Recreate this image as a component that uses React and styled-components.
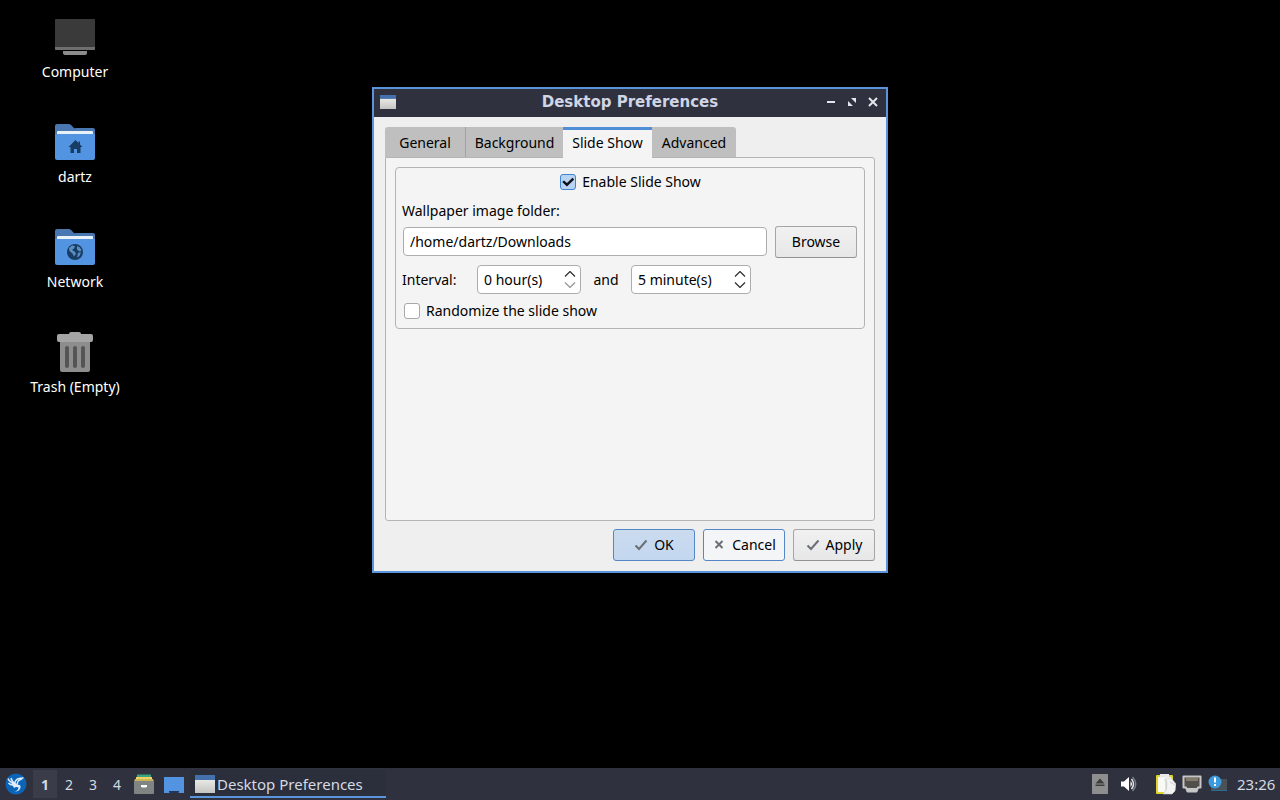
import React, { useState } from "react";
import styled, { createGlobalStyle, css } from "styled-components";

const color = {
  accent: "#5a94da",
  bar: "#2f323e",
  barText: "#d3dae3",
  window: "#efefef",
  panel: "#f4f4f4",
  line: "#b4b4b4",
  tab: "#bfbfbf",
};

const GlobalStyle = createGlobalStyle`
  *, *::before, *::after { box-sizing: border-box; }
  body { margin: 0; background: #000; }
  body, button, input {
    font-family: "Noto Sans", "Open Sans", sans-serif;
    font-size: 14px;
    line-height: 20px;
    color: #000;
  }
  button { padding: 0; margin: 0; border: 0; background: none; }
  svg { display: block; flex: none; }
`;

const Screen = styled.div`
  min-height: 100vh;
  display: flex;
  flex-direction: column;
  background: #000;
`;

const Desktop = styled.main`
  position: relative;
  flex: 1;
`;

const IconColumn = styled.div`
  width: 150px;
  padding-top: 16px;
  display: flex;
  flex-direction: column;
  gap: 36px;
`;

const DesktopIcon = styled.a`
  height: 69px;
  display: flex;
  flex-direction: column;
  align-items: center;
  gap: 4px;
  color: #fff;
  text-decoration: none;
`;

const Window = styled.section`
  position: absolute;
  left: 372px;
  top: 87px;
  width: 516px;
  border: 2px solid ${color.accent};
  background: ${color.window};
`;

const TitleBar = styled.header`
  height: 28px;
  padding: 0 6px 2px;
  display: flex;
  align-items: center;
  background: ${color.bar};
`;

const Title = styled.h1`
  flex: 1;
  margin: 0;
  padding-left: 40px;
  text-align: center;
  font: bold 15px/20px "DejaVu Sans", sans-serif;
  color: #d0d5e6;
`;

const TitleButtons = styled.div`
  display: flex;
  gap: 7px;
`;

const TitleButton = styled.button`
  width: 14px;
  height: 14px;
`;

const WindowBody = styled.div`
  padding: 10px 11px;
`;

const TabList = styled.div`
  display: flex;
`;

const Tab = styled.button`
  width: ${(p) => p.$width}px;
  height: 30px;
  padding-top: 2px;
  background: ${color.tab};
  border-right: ${(p) => (p.$divided ? "1px solid #a2a2a2" : "0")};
  &:first-child { border-top-left-radius: 3px; }
  &:last-child { border-top-right-radius: 3px; }
  ${(p) =>
    p.$active &&
    css`
      height: 31px;
      margin-bottom: -1px;
      padding: 0 0 2px;
      z-index: 1;
      background: ${color.panel};
      border-top: 3px solid #4f8ed4;
    `}
`;

const TabPanel = styled.div`
  height: 364px;
  padding: 9px;
  border: 1px solid ${color.line};
  border-radius: 0 3px 3px 3px;
  background: ${color.panel};
`;

const Group = styled.fieldset`
  margin: 0;
  min-width: 0;
  height: 162px;
  padding: 4px 7px 0 6px;
  border: 1px solid ${color.line};
  border-radius: 4px;
`;

const CheckLabel = styled.label`
  display: flex;
  align-items: center;
  justify-content: ${(p) => (p.$centered ? "center" : "flex-start")};
  gap: 6px;
  padding-left: 2px;
`;

const CheckBox = styled.input`
  appearance: none;
  width: 16px;
  height: 16px;
  margin: 0;
  display: grid;
  place-items: center;
  border: 1px solid #a8a8a8;
  border-radius: 3px;
  background: #fff;
  &:checked {
    border-color: #3f84d2;
    background: #b9d3f2;
  }
  &:checked::before {
    content: "";
    width: 12px;
    height: 10px;
    background: #10131c;
    clip-path: polygon(0 50%, 15% 34%, 40% 60%, 86% 8%, 100% 24%, 40% 96%);
  }
`;

const FieldLabel = styled.label`
  display: block;
  padding: 9px 0 5px;
`;

const Row = styled.div`
  display: flex;
  align-items: center;
`;

const PathRow = styled(Row)`
  align-items: flex-start;
  gap: 8px;
  padding-left: 1px;
`;

const field = css`
  height: 29px;
  border: 1px solid #adadad;
  border-radius: 4px;
  background: #fff;
`;

const PathInput = styled.input`
  ${field}
  flex: 1;
  min-width: 0;
  margin-top: 1px;
  padding: 0 6px;
`;

const Button = styled.button`
  width: 82px;
  height: 32px;
  display: flex;
  align-items: center;
  justify-content: center;
  gap: 6px;
  border: 1px solid #a5a5a5;
  border-bottom-color: #929292;
  border-radius: 3px;
  background: linear-gradient(#f1f1f1, #e7e7e7);
  ${(p) =>
    p.$kind === "default" &&
    css`
      border-color: #5587c6;
      background: linear-gradient(#cadbee, #c3d7f0);
    `}
  ${(p) =>
    p.$kind === "focused" &&
    css`
      border-color: #5587c6;
      background: #f4f5f7;
    `}
`;

const IntervalRow = styled(Row)`
  padding: 7px 0;
`;

const IntervalLabel = styled.span`
  width: 75px;
`;

const And = styled.span`
  width: 50px;
  text-align: center;
`;

const SpinBox = styled.span`
  ${field}
  width: ${(p) => p.$width}px;
  padding: 0 4px 0 6px;
  display: flex;
  align-items: center;
`;

const SpinInput = styled.input`
  flex: 1;
  min-width: 0;
  padding: 0;
  border: 0;
  outline: 0;
  background: none;
`;

const SpinArrows = styled.span`
  display: flex;
  flex-direction: column;
`;

const SpinButton = styled.button`
  width: 12px;
  height: 11px;
  display: grid;
  place-items: center;
  opacity: ${(p) => (p.$dim ? 0.5 : 1)};
`;

const Actions = styled.footer`
  display: flex;
  justify-content: flex-end;
  gap: 8px;
  padding-top: 8px;
`;

const Taskbar = styled.nav`
  height: 32px;
  display: flex;
  align-items: center;
  padding: 0 4px 0 5px;
  background: ${color.bar};
`;

const BarButton = styled.button`
  display: grid;
  place-items: center;
`;

const Pager = styled.div`
  display: flex;
  padding: 0 5px 0 6px;
`;

const PagerButton = styled.button`
  width: 24px;
  height: 28px;
  padding-top: 2px;
  color: ${color.barText};
  font-weight: ${(p) => (p.$current ? 700 : 400)};
  background: ${(p) => (p.$current ? "#3a3d49" : "none")};
`;

const Launchers = styled.div`
  display: flex;
  gap: 10px;
`;

const Task = styled.button`
  width: 196px;
  height: 28px;
  margin-left: 6px;
  padding: 2px 0 0 5px;
  display: flex;
  align-items: center;
  gap: 2px;
  border-bottom: 2px solid ${color.accent};
  background: #2b2e3b;
  color: ${color.barText};
  font-size: 15px;
`;

const Tray = styled.div`
  margin-left: auto;
  display: flex;
  align-items: center;
`;

const TrayGroup = styled.div`
  display: flex;
  align-items: center;
  gap: ${(p) => p.$gap}px;
  padding-right: ${(p) => p.$after}px;
`;

const Clock = styled.time`
  width: 39px;
  white-space: nowrap;
  font-size: 15px;
  color: ${color.barText};
`;

const ComputerIcon = () => (
  <svg width="42" height="42" viewBox="0 0 42 42" aria-hidden="true">
    <rect x="1" y="3" width="40" height="31" rx="1" fill="#3a3a3a" />
    <path d="M1 31h40v2a1 1 0 0 1-1 1H2a1 1 0 0 1-1-1z" fill="#6e6e6e" />
    <path d="M9 35h24v2a2 2 0 0 1-2 2H11a2 2 0 0 1-2-2z" fill="#8c8c8c" />
  </svg>
);

const FolderIcon = ({ children }) => (
  <svg width="42" height="42" viewBox="0 0 42 42" aria-hidden="true">
    <path d="M1 5a2 2 0 0 1 2-2h12q2 0 3.500 2.500T22 7h17a2 2 0 0 1 2 2v15H1z" fill="#4877b1" />
    <path d="M3 11a1 1 0 0 1 1-1h34a1 1 0 0 1 1 1v6H3z" fill="#e8f0f8" />
    <path d="M1 13h40v24a2 2 0 0 1-2 2H3a2 2 0 0 1-2-2z" fill="#5294e2" />
    {children}
  </svg>
);

const HomeMark = () => (
  <path d="M21.500 19l3 3v-1.500h1.500V23.500l2.500 2.500h-2v6h-3.500v-4h-3v4H16.500v-6h-2z" fill="#183c63" />
);

const GlobeMark = () => (
  <>
    <circle cx="21" cy="26" r="8" fill="#183c63" />
    <path d="M15 22l3-2.500 3 .5-1 2.500-2 1.500 2.500 1.500 1.500 2-2 3-1.500-3-3-2.500zM23 20l3 1.500 1.500 3-2 1-2.500-2zM24 27l3-1-1.500 4-2.500 1.500z" fill="#5b8fc4" />
  </>
);

const TrashIcon = () => (
  <svg width="42" height="42" viewBox="0 0 42 42" aria-hidden="true">
    <path d="M6 11h30v28a2 2 0 0 1-2 2H8a2 2 0 0 1-2-2z" fill="#8d8d8d" />
    <path d="M15 3a2 2 0 0 1 2-2h8a2 2 0 0 1 2 2h10a2 2 0 0 1 2 2v4a2 2 0 0 1-2 2H5a2 2 0 0 1-2-2V5a2 2 0 0 1 2-2z" fill="#a5a5a5" />
    <path d="M13 17v18M21 17v18M29 17v18" stroke="#555" strokeWidth="4" strokeLinecap="round" />
  </svg>
);

const WindowIcon = ({ width, height }) => (
  <svg width={width} height={height} viewBox="0 0 20 18" preserveAspectRatio="none" aria-hidden="true">
    <defs>
      <linearGradient id="sheet" x1="0" y1="0" x2="0" y2="1">
        <stop offset="0" stopColor="#f6f5f0" />
        <stop offset="1" stopColor="#c4c5c3" />
      </linearGradient>
    </defs>
    <rect width="20" height="18" fill="url(#sheet)" />
    <rect width="20" height="5" fill="#4470ad" />
  </svg>
);

const MinimizeIcon = () => (
  <svg width="14" height="14" viewBox="0 0 14 14" aria-hidden="true">
    <rect x="3" y="6" width="8" height="2" fill="#e4e6ec" />
  </svg>
);

const MaximizeIcon = () => (
  <svg width="14" height="14" viewBox="0 0 14 14" aria-hidden="true">
    <path d="M6 3h5v5zM3 6l5 5H3z" fill="#e4e6ec" />
  </svg>
);

const CloseIcon = () => (
  <svg width="14" height="14" viewBox="0 0 14 14" aria-hidden="true">
    <path d="M3 3l8 8M11 3l-8 8" stroke="#e4e6ec" strokeWidth="2" />
  </svg>
);

const CheckIcon = () => (
  <svg width="14" height="14" viewBox="0 0 14 14" aria-hidden="true">
    <path d="M1.500 7.500l3.500 3.500L12.500 2.500" fill="none" stroke="#6c6f76" strokeWidth="2" />
  </svg>
);

const CrossIcon = () => (
  <svg width="14" height="14" viewBox="0 0 14 14" aria-hidden="true">
    <path d="M3.500 3l7 7M10.500 3l-7 7" fill="none" stroke="#6c6f76" strokeWidth="2" />
  </svg>
);

const ArrowIcon = ({ up }) => (
  <svg width="12" height="6" viewBox="0 0 12 6" aria-hidden="true">
    <path d={up ? "M1 5.500l5-5 5 5" : "M1 .5l5 5 5-5"} fill="none" stroke="#2c2c2c" strokeWidth="1.200" />
  </svg>
);

const MenuIcon = () => (
  <svg width="22" height="22" viewBox="0 0 22 22" aria-hidden="true">
    <circle cx="11" cy="11" r="10.500" fill="#0b64b8" />
    <path d="M3 5.500Q4 8 9 11.500M3.500 10q2 2.500 5.500 2M6 5q1 4 4.500 6" fill="none" stroke="#e2effb" strokeWidth="1.400" />
    <path d="M9.500 11.500Q10 6.500 14 5.500l4-.5-2.500 1.700Q12 8 12.500 11z" fill="none" stroke="#e2effb" strokeWidth="1.300" strokeLinejoin="round" />
    <path d="M7 10q4 .5 5 2 4-1 3.500 2.500Q15 18 9.500 19q4-2 4-4.500Q11 13.500 9 15q-2-3-2-5z" fill="#e2effb" />
  </svg>
);

const FileManagerIcon = () => (
  <svg width="20" height="22" viewBox="0 0 20 22" aria-hidden="true">
    <path d="M3 1.500h14V6H3z" fill="#3aa27f" />
    <path d="M2 4h16v3H2z" fill="#f0d264" />
    <path d="M1 6h18l1 3H0z" fill="#c9b458" />
    <rect y="8" width="20" height="13" rx="1" fill="#7e8583" />
    <path d="M7 12h6v2q-3 1-6 0z" fill="#fff" />
  </svg>
);

const ShowDesktopIcon = () => (
  <svg width="20" height="18" viewBox="0 0 20 18" aria-hidden="true">
    <path d="M0 2h20v16h-5l-1-1.500H6L5 18H0z" fill="#5294e2" />
    <path d="M5 16h10v1h-1v1H6v-1H5z" fill="#20365a" />
  </svg>
);

const EjectIcon = () => (
  <svg width="16" height="20" viewBox="0 0 16 20" aria-hidden="true">
    <rect width="16" height="20" fill="#8e8e8e" />
    <path d="M8 4.500l4.500 5h-9zM3.500 10.500h9v1.500h-9z" fill="#3d3d3d" />
  </svg>
);

const VolumeIcon = () => (
  <svg width="18" height="18" viewBox="0 0 18 18" aria-hidden="true">
    <path d="M1 6.500h3L9 2v14l-5-4.500H1z" fill="#fff" />
    <path d="M10.500 6q3 3 0 6z" fill="#fff" />
    <path d="M11.500 4q4 5 0 10" fill="none" stroke="#e4e6ec" strokeWidth="1.500" />
    <path d="M12.500 2q6.500 7 0 14" fill="none" stroke="#777b87" strokeWidth="1.500" />
  </svg>
);

const ClipboardIcon = () => (
  <svg width="20" height="22" viewBox="0 0 20 22" aria-hidden="true">
    <rect y="2" width="17" height="19" rx="1" fill="#dfd52f" />
    <path d="M2 4h13v15H2z" fill="#fafaf4" />
    <path d="M4 1h9v3.500H4z" fill="#e9e9e9" />
    <path d="M9 6l6-1 5 6-1 7-3 3H7l3-4z" fill="#f3f3f3" stroke="#c9c9c9" strokeWidth=".6" />
    <path d="M9 6q3 2 1 11M14 9l5 3" fill="none" stroke="#cdcdcd" />
  </svg>
);

const NetworkIcon = () => (
  <svg width="20" height="18" viewBox="0 0 20 18" aria-hidden="true">
    <path d="M1.500 1.500h17v11h-2.500l-1.500 4h-9l-1.500-4H1.500z" fill="#504f4b" stroke="#c6c6c6" strokeWidth="2" strokeLinejoin="round" />
    <path d="M4 13h12l-1.500 3.500h-9z" fill="#c6c6c6" />
    <path d="M5 3v3M7 3v3M9 3v3M11 3v3M13 3v3M15 3v3" stroke="#b4a88d" />
  </svg>
);

const AlertIcon = () => (
  <svg width="20" height="20" viewBox="0 0 20 20" aria-hidden="true">
    <rect x="3" y="5" width="16" height="12" fill="#4a5257" />
    <path d="M3 16h16v1H3z" fill="#2c6c93" />
    <circle cx="7" cy="8" r="6.500" fill="#3c9bdc" />
    <path d="M6 3.500h2v5H6zM6 10h2v2H6z" fill="#fff" />
  </svg>
);

const desktopItems = [
  { name: "Computer", icon: <ComputerIcon /> },
  { name: "dartz", icon: <FolderIcon><HomeMark /></FolderIcon> },
  { name: "Network", icon: <FolderIcon><GlobeMark /></FolderIcon> },
  { name: "Trash (Empty)", icon: <TrashIcon /> },
];

const tabs = [
  { name: "General", width: 81, divided: true },
  { name: "Background", width: 97 },
  { name: "Slide Show", width: 89 },
  { name: "Advanced", width: 84 },
];

function Spinner({ label, unit, initial, width }) {
  const [value, setValue] = useState(initial);
  return (
    <SpinBox $width={width}>
      <SpinInput
        role="spinbutton"
        aria-label={label}
        aria-valuenow={value}
        readOnly
        value={`${value} ${unit}`}
      />
      <SpinArrows>
        <SpinButton type="button" aria-label={`Increase ${label}`} onClick={() => setValue(value + 1)}>
          <ArrowIcon up />
        </SpinButton>
        <SpinButton
          type="button"
          aria-label={`Decrease ${label}`}
          $dim={value === 0}
          onClick={() => setValue(Math.max(0, value - 1))}
        >
          <ArrowIcon />
        </SpinButton>
      </SpinArrows>
    </SpinBox>
  );
}

function PreferencesWindow() {
  return (
    <Window aria-labelledby="window-title">
      <TitleBar>
        <WindowIcon width={16} height={14} />
        <Title id="window-title">Desktop Preferences</Title>
        <TitleButtons>
          <TitleButton type="button" aria-label="Minimize"><MinimizeIcon /></TitleButton>
          <TitleButton type="button" aria-label="Maximize"><MaximizeIcon /></TitleButton>
          <TitleButton type="button" aria-label="Close"><CloseIcon /></TitleButton>
        </TitleButtons>
      </TitleBar>
      <WindowBody>
        <TabList role="tablist">
          {tabs.map((t) => (
            <Tab
              key={t.name}
              type="button"
              role="tab"
              aria-selected={t.name === "Slide Show"}
              $width={t.width}
              $divided={t.divided}
              $active={t.name === "Slide Show"}
            >
              {t.name}
            </Tab>
          ))}
        </TabList>
        <TabPanel role="tabpanel">
          <Group aria-label="Slide Show">
            <CheckLabel $centered>
              <CheckBox type="checkbox" defaultChecked />
              Enable Slide Show
            </CheckLabel>
            <FieldLabel htmlFor="folder">Wallpaper image folder:</FieldLabel>
            <PathRow>
              <PathInput id="folder" type="text" defaultValue="/home/dartz/Downloads" />
              <Button type="button">Browse</Button>
            </PathRow>
            <IntervalRow>
              <IntervalLabel>Interval:</IntervalLabel>
              <Spinner label="hours" unit="hour(s)" initial={0} width={104} />
              <And>and</And>
              <Spinner label="minutes" unit="minute(s)" initial={5} width={120} />
            </IntervalRow>
            <CheckLabel>
              <CheckBox type="checkbox" />
              Randomize the slide show
            </CheckLabel>
          </Group>
        </TabPanel>
        <Actions>
          <Button type="button" $kind="default"><CheckIcon />OK</Button>
          <Button type="button" $kind="focused"><CrossIcon />Cancel</Button>
          <Button type="button"><CheckIcon />Apply</Button>
        </Actions>
      </WindowBody>
    </Window>
  );
}

export default function App() {
  return (
    <Screen>
      <GlobalStyle />
      <Desktop>
        <IconColumn>
          {desktopItems.map((item) => (
            <DesktopIcon key={item.name} href="#">
              {item.icon}
              {item.name}
            </DesktopIcon>
          ))}
        </IconColumn>
        <PreferencesWindow />
      </Desktop>
      <Taskbar>
        <BarButton type="button" aria-label="Menu"><MenuIcon /></BarButton>
        <Pager>
          {[1, 2, 3, 4].map((n) => (
            <PagerButton key={n} type="button" $current={n === 1}>{n}</PagerButton>
          ))}
        </Pager>
        <Launchers>
          <BarButton type="button" aria-label="File manager"><FileManagerIcon /></BarButton>
          <BarButton type="button" aria-label="Show desktop"><ShowDesktopIcon /></BarButton>
        </Launchers>
        <Task type="button">
          <WindowIcon width={20} height={18} />
          Desktop Preferences
        </Task>
        <Tray>
          <TrayGroup $gap={12} $after={18}>
            <BarButton type="button" aria-label="Removable media"><EjectIcon /></BarButton>
            <BarButton type="button" aria-label="Volume"><VolumeIcon /></BarButton>
          </TrayGroup>
          <TrayGroup $gap={6} $after={9}>
            <BarButton type="button" aria-label="Clipboard"><ClipboardIcon /></BarButton>
            <BarButton type="button" aria-label="Network"><NetworkIcon /></BarButton>
            <BarButton type="button" aria-label="Updates"><AlertIcon /></BarButton>
          </TrayGroup>
          <Clock>23:26</Clock>
        </Tray>
      </Taskbar>
    </Screen>
  );
}
